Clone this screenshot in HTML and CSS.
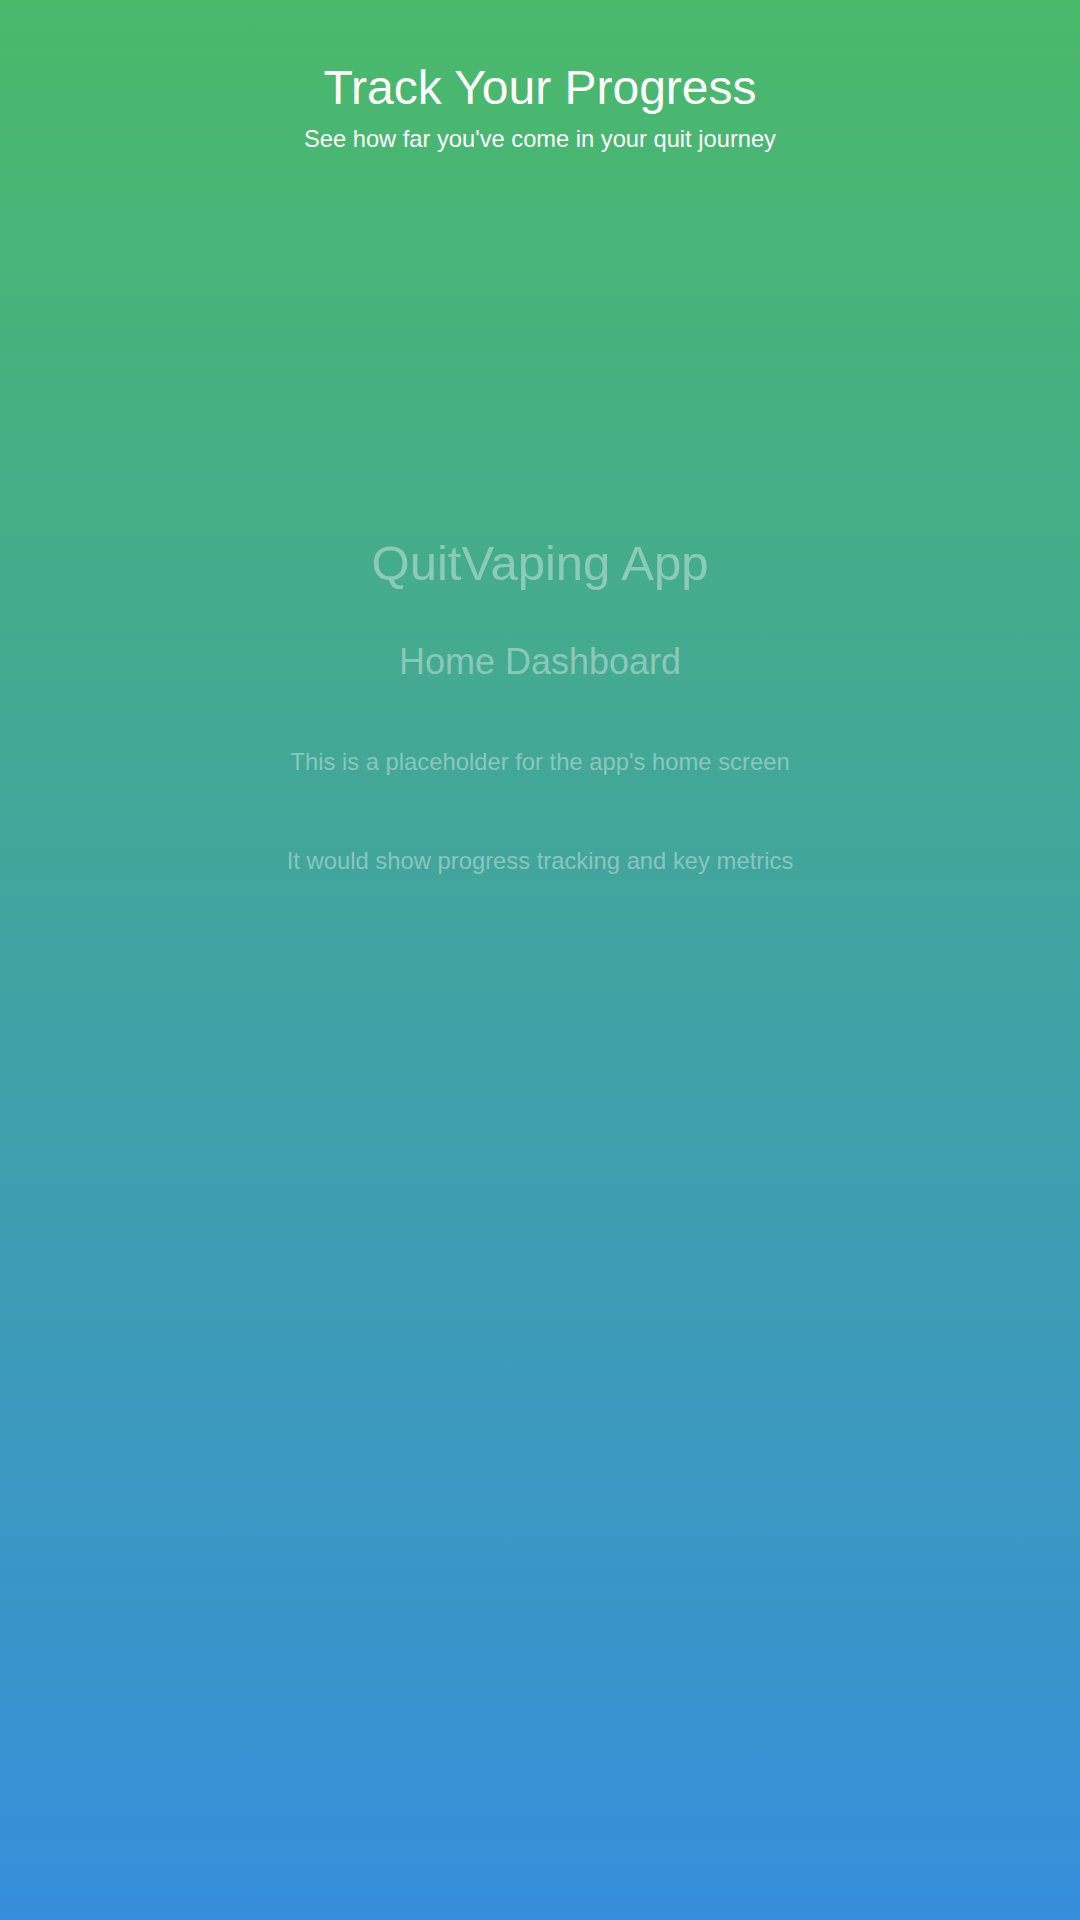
FILE: index.html
```html
<!DOCTYPE html>
<html lang="en">
<head>
<meta charset="utf-8">
<title>Track Your Progress</title>
<link rel="stylesheet" href="styles.css">
</head>
<body>
<div class="screen">
  <header class="header">
    <h1 class="title">Track Your Progress</h1>
    <p class="subtitle">See how far you've come in your quit journey</p>
  </header>
  <main class="placeholder">
    <h2 class="app-name">QuitVaping App</h2>
    <h3 class="screen-name">Home Dashboard</h3>
    <p class="note note-first">This is a placeholder for the app's home screen</p>
    <p class="note note-second">It would show progress tracking and key metrics</p>
  </main>
</div>
</body>
</html>
```

FILE: styles.css
```css
html, body {
  margin: 0;
  padding: 0;
}

body {
  font-family: "Liberation Sans", Arial, Helvetica, sans-serif;
}

.screen {
  width: 1080px;
  height: 1920px;
  background: linear-gradient(180deg, #4bb96a 0%, #41a3a2 50%, #368edc 100%);
  display: flex;
  flex-direction: column;
  align-items: center;
  text-align: center;
  overflow: hidden;
}

.header {
  padding-top: 60px;
  display: flex;
  flex-direction: column;
  align-items: center;
}

.title {
  margin: 0;
  font-size: 48px;
  line-height: 56px;
  font-weight: 400;
  color: #ffffff;
}

.subtitle {
  margin: 9px 0 0;
  font-size: 23.7px;
  line-height: 28px;
  color: #ffffff;
}

.placeholder {
  margin-top: 382px;
  display: flex;
  flex-direction: column;
  align-items: center;
  color: rgba(255, 255, 255, 0.38);
}

.app-name {
  margin: 0;
  font-size: 49px;
  line-height: 56px;
  font-weight: 400;
}

.screen-name {
  margin: 50px 0 0;
  font-size: 36px;
  line-height: 42px;
  font-weight: 400;
}

.note {
  margin: 0;
  font-size: 23.8px;
  line-height: 28px;
}

.note-first {
  margin-top: 65px;
}

.note-second {
  margin-top: 71px;
}
```
